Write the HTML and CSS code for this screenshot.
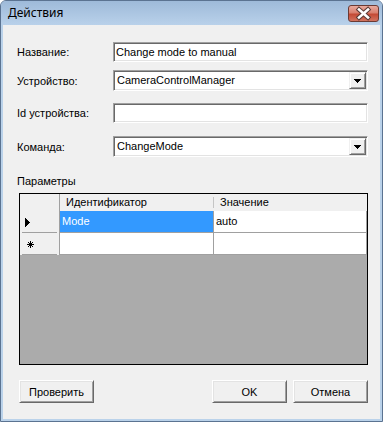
FILE: index.html
```html
<!DOCTYPE html>
<html lang="ru">

<head>
    <meta charset="UTF-8" />
    <meta name="viewport" content="width=device-width, initial-scale=1.0" />
    <title>Действия</title>

    <link rel="stylesheet" href="styles.css">

</head>

<body>
    <div class="window">
        <div class="titlebar">
            <span class="title">Действия</span>
            <span class="close-btn">
                <svg width="31" height="17" viewBox="0 0 31 17">
                    <path d="M11 4.5 L20 12.5 M20 4.5 L11 12.5" stroke="#5a3b36" stroke-width="4.6" stroke-linecap="square" fill="none" />
                    <path d="M11 4.5 L20 12.5 M20 4.5 L11 12.5" stroke="#ffffff" stroke-width="2.6" stroke-linecap="square" fill="none" />
                </svg>
            </span>
        </div>

        <div class="client">
            <div class="field f-name">
                <label>Название:</label>
                <div class="textbox">Change mode to manual</div>
            </div>
            <div class="field f-device">
                <label>Устройство:</label>
                <div class="combo">
                    <span class="combo-text">CameraControlManager</span>
                    <span class="combo-btn">
                        <svg width="7" height="4" viewBox="0 0 7 4" shape-rendering="crispEdges">
                            <rect x="0" y="0" width="7" height="1" />
                            <rect x="1" y="1" width="5" height="1" />
                            <rect x="2" y="2" width="3" height="1" />
                            <rect x="3" y="3" width="1" height="1" />
                        </svg>
                    </span>
                </div>
            </div>
            <div class="field f-id">
                <label>Id устройства:</label>
                <div class="textbox"></div>
            </div>
            <div class="field f-cmd">
                <label>Команда:</label>
                <div class="combo">
                    <span class="combo-text">ChangeMode</span>
                    <span class="combo-btn">
                        <svg width="7" height="4" viewBox="0 0 7 4" shape-rendering="crispEdges">
                            <rect x="0" y="0" width="7" height="1" />
                            <rect x="1" y="1" width="5" height="1" />
                            <rect x="2" y="2" width="3" height="1" />
                            <rect x="3" y="3" width="1" height="1" />
                        </svg>
                    </span>
                </div>
            </div>

            <div class="params-label">Параметры</div>

            <div class="grid">
                <div class="grid-head">
                    <div class="rh"></div>
                    <div class="ch c1">Идентификатор</div>
                    <div class="ch c2">Значение</div>
                </div>
                <div class="grid-row">
                    <div class="rh">
                        <svg width="5" height="9" viewBox="0 0 5 9" shape-rendering="crispEdges">
                            <rect x="0" y="0" width="1" height="9" />
                            <rect x="1" y="1" width="1" height="7" />
                            <rect x="2" y="2" width="1" height="5" />
                            <rect x="3" y="3" width="1" height="3" />
                            <rect x="4" y="4" width="1" height="1" />
                        </svg>
                    </div>
                    <div class="cell c1 selected">Mode</div>
                    <div class="cell c2">auto</div>
                </div>
                <div class="grid-row">
                    <div class="rh new-row">
                        <svg width="7" height="7" viewBox="0 0 7 7" shape-rendering="crispEdges">
                            <rect x="0" y="3" width="7" height="1" />
                            <rect x="3" y="0" width="1" height="7" />
                            <rect x="1" y="1" width="1" height="1" />
                            <rect x="2" y="2" width="1" height="1" />
                            <rect x="4" y="4" width="1" height="1" />
                            <rect x="5" y="5" width="1" height="1" />
                            <rect x="5" y="1" width="1" height="1" />
                            <rect x="4" y="2" width="1" height="1" />
                            <rect x="2" y="4" width="1" height="1" />
                            <rect x="1" y="5" width="1" height="1" />
                        </svg>
                    </div>
                    <div class="cell c1"></div>
                    <div class="cell c2"></div>
                </div>
            </div>

            <div class="buttons">
                <button type="button">Проверить</button>
                <span class="spacer"></span>
                <button type="button">OK</button>
                <button type="button">Отмена</button>
            </div>
        </div>
    </div>
</body>

</html>
```

FILE: styles.css
```css
* {
    box-sizing: border-box;
}

html,
body {
    margin: 0;
    padding: 0;
}

body {
    width: 383px;
    height: 422px;
    background: #ffffff;
    font-family: "Liberation Sans", Arial, sans-serif;
    font-size: 11px;
    color: #000;
}

/* window frame */
.window {
    width: 383px;
    height: 422px;
    border: 1px solid #5b7391;
    border-radius: 6px 6px 0 0;
    background: #bad2ea;
    display: flex;
    flex-direction: column;
}

.titlebar {
    flex: none;
    height: 24px;
    display: flex;
    justify-content: space-between;
    align-items: flex-start;
    background: linear-gradient(#9ebad9, #b9d1ea);
    border-radius: 5px 5px 0 0;
}

.title {
    font-family: "Noto Sans", "DejaVu Sans", sans-serif;
    font-size: 12px;
    line-height: 24px;
    padding-left: 7px;
    color: #000;
}

.close-btn {
    display: flex;
    width: 31px;
    height: 17px;
    margin: 4px 3px 0 0;
    border: 1px solid #6b3a33;
    border-radius: 3px;
    background: linear-gradient(#e8aa9e 0%, #d9806f 45%, #c44a35 55%, #d2735f 100%);
}

.close-btn svg {
    margin: -1px;
}

.client {
    flex: 1;
    margin: 0 2px 2px;
    background: #f0f0f0;
    display: flex;
    flex-direction: column;
    padding: 0 12px 0 14px;
}

/* form fields */
.field {
    display: flex;
    align-items: center;
}

.field label {
    width: 96px;
}

.f-name {
    margin-top: 17px;
}

.f-device {
    margin-top: 8px;
}

.f-id {
    margin-top: 12px;
}

.f-cmd {
    margin-top: 13px;
}

.textbox,
.combo {
    flex: 1;
    background: #fff;
    border: 1px solid;
    border-color: #a0a0a0 #ffffff #ffffff #a0a0a0;
    box-shadow: inset 1px 1px #696969, inset -1px -1px #e3e3e3;
}

.textbox {
    height: 20px;
    padding: 0 0 0 2px;
    line-height: 18px;
}

.combo {
    height: 21px;
    display: flex;
    padding: 1px;
}

.combo-text {
    flex: 1;
    padding-left: 2px;
    line-height: 17px;
}

.combo-btn {
    width: 17px;
    height: 17px;
    display: flex;
    align-items: center;
    justify-content: center;
    background: #f0f0f0;
    border: 1px solid;
    border-color: #f0f0f0 #696969 #696969 #f0f0f0;
    box-shadow: inset 1px 1px #fff, inset -1px -1px #a0a0a0;
}

.combo-btn svg {
    margin-top: 1px;
}

/* parameters grid */
.params-label {
    margin-top: 17px;
    line-height: 14px;
}

.grid {
    margin: 5px 0 0 2px;
    height: 172px;
    border: 1px solid #000;
    background: #ababab;
    display: flex;
    flex-direction: column;
}

.grid-head,
.grid-row {
    display: flex;
    flex: none;
}

.grid-head {
    height: 17px;
    background: #f0f0f0;
}

.grid-row {
    height: 22px;
}

.rh {
    width: 40px;
    flex: none;
    display: flex;
    align-items: center;
    padding-left: 5px;
    background: #f0f0f0;
    border-right: 1px solid #a0a0a0;
}

.grid-row .rh {
    background: #f0f0f0 linear-gradient(#a0a0a0, #a0a0a0) 2px 100% / 35px 1px no-repeat;
}

.rh.new-row {
    padding-left: 7px;
}

.c1 {
    width: 154px;
    flex: none;
}

.c2 {
    flex: 1;
}

.ch {
    padding-left: 6px;
    line-height: 17px;
}

.ch.c1 {
    background: linear-gradient(#c5c5c5, #c5c5c5) 100% 3px / 1px 11px no-repeat;
}

.cell {
    background: #fff;
    border-right: 1px solid #a0a0a0;
    border-bottom: 1px solid #a0a0a0;
    padding-left: 2px;
    line-height: 21px;
}

.cell.selected {
    background: #3399ff;
    color: #fff;
}

/* bottom buttons */
.buttons {
    margin-top: 15px;
    padding-left: 2px;
    display: flex;
    gap: 6px;
}

.spacer {
    flex: 1;
}

button {
    width: 75px;
    height: 23px;
    padding: 0;
    font-family: "Liberation Sans", Arial, sans-serif;
    font-size: 11px;
    color: #000;
    background: #f0f0f0;
    border: 1px solid;
    border-color: #ffffff #696969 #696969 #ffffff;
    box-shadow: inset 1px 1px #e3e3e3, inset -1px -1px #a0a0a0;
    border-radius: 0;
}
```
